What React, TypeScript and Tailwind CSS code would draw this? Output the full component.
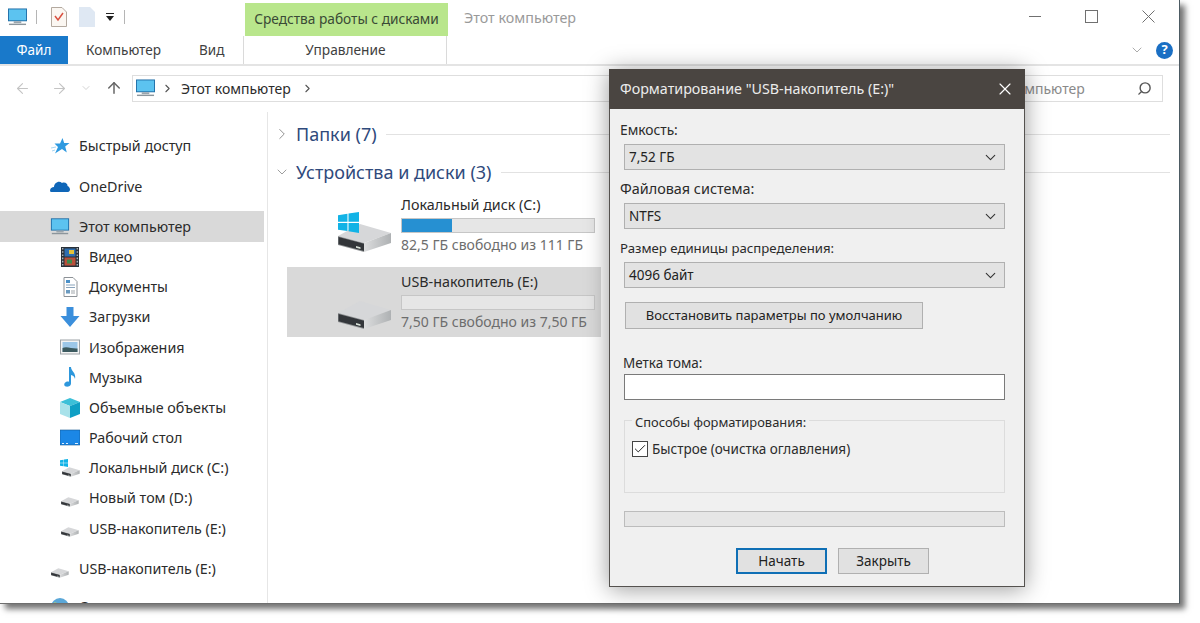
import { ChevronDown, ChevronRight, Search, X, ArrowLeft, ArrowRight, ArrowUp, Check } from "lucide-react";

const font = "font-['Noto_Sans','Open_Sans',sans-serif]";

function Monitor({ className = "w-[22px] h-[19px]" }: { className?: string }) {
  return (
    <svg viewBox="0 0 22 19" className={className}>
      <rect x="1" y="0.5" width="20" height="13.5" fill="#1f6fa8" />
      <rect x="2" y="1.5" width="18" height="11.5" fill="#5cc3f0" />
      <rect x="7" y="14" width="8" height="2" fill="#9aa5ad" />
      <rect x="2" y="16.5" width="18" height="1.5" fill="#8b959c" />
    </svg>
  );
}

function Drive({ className = "w-[18px] h-[10px]" }: { className?: string }) {
  return (
    <svg viewBox="0 0 54 30" className={className}>
      <defs>
        <linearGradient id="driveSide" x1="0" x2="1" y1="0" y2="0">
          <stop offset="0" stopColor="#dcddde" />
          <stop offset="1" stopColor="#aeb1b3" />
        </linearGradient>
      </defs>
      <path d="M0 13 L22 1 L53 10 L26 20 Z" fill="#d6d7d9" />
      <path d="M26 20 L53 10 V20 L26 29 Z" fill="url(#driveSide)" />
      <path d="M0 13 L26 20 V29 L0 22 Z" fill="#8f9294" />
      <path d="M0.5 14 L26 20.8 V28 L0.5 21.2 Z" fill="#33363a" />
      <path d="M18 23 L22.5 24.2 V26 L18 24.8 Z" fill="#d9e2d9" />
    </svg>
  );
}

function WinLogo({ className }: { className: string }) {
  return (
    <svg viewBox="0 0 20 20" className={className}>
      <path d="M0 3 L9 1.6 V9.4 H0 Z M10 1.4 L20 0 V9.4 H10 Z M0 10.4 H9 V18.2 L0 17 Z M10 10.4 H20 V20 L10 18.4 Z" fill="#12b3e6" />
    </svg>
  );
}

function NavIcon({ kind }: { kind: string }) {
  const cls = "w-[20px] h-[20px]";
  switch (kind) {
    case "star":
      return (
        <svg viewBox="0 0 20 20" className={cls}>
          <path d="M12.5 2 L14.2 7 H19.5 L15.2 10.4 L16.8 16.5 L12 13 L5 17.5 L8 11 L4.5 7.5 H10 Z" fill="#2f9ae0" />
          <path d="M1 12 L6 11 M2 15 L5 14" stroke="#a9d6f2" strokeWidth="1" />
        </svg>
      );
    case "cloud":
      return (
        <svg viewBox="0 0 20 20" className={cls}>
          <path d="M0 15 C0 12 2 11 4 11 C4 7 9 4 12 7 C15 5.5 18 8 17.5 10 C19 10 20 12.5 20 13.5 C20 15 19 16 18 16 H2 C1 16 0 15.8 0 15 Z" fill="#0f66b8" />
        </svg>
      );
    case "film":
      return (
        <svg viewBox="0 0 20 20" className={cls}>
          <rect x="1" y="0" width="18" height="20" fill="#2a3138" />
          <path d="M2.7 1 V19 M17.3 1 V19" stroke="#aab4bb" strokeWidth="1.4" strokeDasharray="1.6 1.6" />
          <rect x="4.5" y="1.5" width="11" height="8" fill="#2f6fb0" />
          <rect x="4.5" y="10.5" width="11" height="8" fill="#b9503a" />
          <rect x="9" y="3" width="5" height="4" fill="#e6c33a" />
          <rect x="7" y="12.5" width="5" height="4" fill="#3f8a4c" />
        </svg>
      );
    case "doc":
      return (
        <svg viewBox="0 0 20 20" className={cls}>
          <path d="M4 0.5 H13 L17 4.5 V19.5 H4 Z" fill="#fff" stroke="#8d9297" />
          <rect x="6" y="3" width="4" height="3" fill="#4a90c8" />
          <path d="M6 8 H15 M6 10.5 H15" stroke="#8aa4bc" />
          <rect x="6" y="13" width="4" height="3.5" fill="#6a9ac0" />
          <path d="M11 14 H15 M11 16 H15" stroke="#a0a6ab" />
        </svg>
      );
    case "down":
      return (
        <svg viewBox="0 0 20 20" className={cls}>
          <path d="M6.5 0 H13.5 V9 H19.5 L10 20 L0.5 9 H6.5 Z" fill="#3b8fdc" />
        </svg>
      );
    case "pic":
      return (
        <svg viewBox="0 0 20 20" className={cls}>
          <rect x="0.5" y="3" width="19" height="14" fill="#f4f4f4" stroke="#9ea3a7" />
          <rect x="2.5" y="5" width="15" height="10" fill="#9cc7e8" />
          <path d="M2.5 15 V11 C7 9 12 12 17.5 11.5 V15 Z" fill="#3c5a5f" />
        </svg>
      );
    case "note":
      return (
        <svg viewBox="0 0 20 20" className={cls}>
          <path d="M9 0 H11 C11 4 16.5 6 15 12 C14.6 9.5 13 8.5 11 8 V16.5 C11 19 8 20 6 19.6 C3.6 19 3.8 16 6 15 C7 14.5 8 14.4 9 14.8 Z" fill="#2d97dc" />
        </svg>
      );
    case "cube":
      return (
        <svg viewBox="0 0 20 20" className={cls}>
          <path d="M10 0 L20 4 L10 8 L0 4 Z" fill="#3cc0d8" />
          <path d="M0 4 L10 8 V20 L0 16 Z" fill="#a8e2ea" />
          <path d="M20 4 L10 8 V20 L20 16 Z" fill="#0f9fc4" />
        </svg>
      );
    case "desk":
      return (
        <svg viewBox="0 0 20 20" className={cls}>
          <rect x="0" y="2" width="20" height="15" fill="#1b87e6" stroke="#14588f" strokeWidth="0.6" />
          <path d="M2 15.5 H4 M6 15.5 H8 M15 15.5 H18" stroke="#dff0ff" />
        </svg>
      );
    case "globe":
      return (
        <svg viewBox="0 0 20 20" className={cls}>
          <circle cx="10" cy="10" r="9" fill="#5aa7d8" />
          <path d="M4 5 C8 5 8 9 12 9 C10 13 7 11 4 9 Z" fill="#8fbf9a" />
        </svg>
      );
    case "osdrive":
      return (
        <span className="relative block w-[20px] h-[20px]">
          <WinLogo className="absolute left-0 top-[1px] w-[8px] h-[8px]" />
          <Drive className="absolute left-[2px] bottom-[1px] w-[18px] h-[10px]" />
        </span>
      );
    default:
      return (
        <span className="flex w-[20px] h-[20px] items-end justify-center pb-[1px]">
          <Drive className="w-[18px] h-[10px]" />
        </span>
      );
  }
}

const libraries = [
  ["film", "Видео"],
  ["doc", "Документы"],
  ["down", "Загрузки"],
  ["pic", "Изображения"],
  ["note", "Музыка"],
  ["cube", "Объемные объекты"],
  ["desk", "Рабочий стол"],
  ["osdrive", "Локальный диск (C:)"],
  ["drive", "Новый том (D:)"],
  ["drive", "USB-накопитель (E:)"],
];

function NavRow({ icon, label, child, className = "" }: { icon: React.ReactNode; label: string; child?: boolean; className?: string }) {
  return (
    <div className={`flex h-[30.2px] items-center gap-[9px] ${child ? "pl-[60px]" : "pl-[50px]"} ${className}`}>
      <span className="flex w-[20px] justify-center">{icon}</span>
      <span className="text-[14.3px] text-[#2b2b2b] whitespace-nowrap">{label}</span>
    </div>
  );
}

function Sidebar() {
  return (
    <div className="w-[264px] shrink-0 pt-[19px]">
      <NavRow icon={<NavIcon kind="star" />} label="Быстрый доступ" />
      <NavRow icon={<NavIcon kind="cloud" />} label="OneDrive" className="mt-[10px]" />
      <NavRow icon={<Monitor />} label="Этот компьютер" className="mt-[10px] bg-[#d9d9d9]" />
      {libraries.map(([icon, label]) => (
        <NavRow key={label} icon={<NavIcon kind={icon} />} label={label} child />
      ))}
      <NavRow icon={<NavIcon kind="drive" />} label="USB-накопитель (E:)" className="mt-[10px]" />
      <NavRow icon={<NavIcon kind="globe" />} label="Сеть" className="mt-[8px]" />
    </div>
  );
}

function SectionHeading({ open, title, className = "" }: { open?: boolean; title: string; className?: string }) {
  return (
    <div className={`flex h-[28px] items-center pr-[9px] ${className}`}>
      <span className="flex w-[28px] justify-center text-[#8a8a8a]">
        {open ? <ChevronDown size={16} strokeWidth={1.25} /> : <ChevronRight size={18} strokeWidth={1.25} />}
      </span>
      <span className="text-[18px] text-[#2f4a7c] whitespace-nowrap">{title}</span>
      <span className="ml-[9px] h-px flex-1 bg-[#e2e2e2]" />
    </div>
  );
}

function DriveCard({ name, free, percent, selected, system }: { name: string; free: string; percent: number; selected?: boolean; system?: boolean }) {
  return (
    <div className={`flex h-[70px] w-[314px] ${selected ? "bg-[#d9d9d9]" : ""}`}>
      <div className="relative h-full w-[114px] shrink-0">
        <Drive className="absolute left-[51px] top-[33px] w-[54px] h-[30px]" />
        {system && <WinLogo className="absolute left-[51px] top-[22px] w-[21px] h-[21px]" />}
      </div>
      <div className="w-[194px] pt-[5px]">
        <div className="text-[14.3px] leading-[20px] text-[#2b2b2b] whitespace-nowrap">{name}</div>
        <div className="mt-[3px] h-[15px] border border-[#c6c6c6] bg-[#e6e6e6]">
          <div className="h-full bg-[#2690d2]" style={{ width: `${percent}%` }} />
        </div>
        <div className="mt-[2px] text-[14px] leading-[20px] text-[#6d6d6d] whitespace-nowrap">{free}</div>
      </div>
    </div>
  );
}

function FieldSelect({ value }: { value: string }) {
  return (
    <div className="ml-[14px] flex h-[26px] w-[381px] items-center justify-between border border-[#b0b0b0] bg-[#e3e3e3] pl-[4px] pr-[5px]">
      <span className="text-[13.5px] text-[#222]">{value}</span>
      <ChevronDown size={17} strokeWidth={1.5} className="text-[#333]" />
    </div>
  );
}

function FieldLabel({ text, className = "" }: { text: string; className?: string }) {
  return <div className={`pl-[10px] leading-[20px] text-[#2b2b2b] ${className}`}>{text}</div>;
}

function FormatDialog() {
  return (
    <div className="absolute left-[609px] top-[69px] w-[416px] border-x border-b border-[#55524f] bg-[#f0f0f0] shadow-[0_2px_22px_rgba(0,0,0,0.4)]">
      <div className="-mx-px flex h-[40px] items-center justify-between bg-[#4a4541] pl-[11px] pr-[10px]">
        <span className="text-[14.3px] text-[#ececec]">Форматирование "USB-накопитель (E:)"</span>
        <X size={20} strokeWidth={1.4} className="text-white" />
      </div>
      <div className="pb-[12px] pt-[11px]">
        <FieldLabel text="Емкость:" className="text-[13.8px]" />
        <div className="mt-[4px]"><FieldSelect value="7,52 ГБ" /></div>
        <FieldLabel text="Файловая система:" className="mt-[9px] text-[14.4px]" />
        <div className="mt-[4px]"><FieldSelect value="NTFS" /></div>
        <FieldLabel text="Размер единицы распределения:" className="mt-[9px] text-[13.2px]" />
        <div className="mt-[4px]"><FieldSelect value="4096 байт" /></div>
        <button className="ml-[15px] mt-[14px] block h-[27px] w-[298px] border border-[#b0b0b0] bg-[#e1e1e1] text-[13px] text-[#222]">
          Восстановить параметры по умолчанию
        </button>
        <FieldLabel text="Метка тома:" className="mt-[24px] pl-[13px] text-[13.5px]" />
        <div className="ml-[14px] mt-px h-[26px] w-[381px] border border-[#7a7a7a] bg-white" />
        <div className="relative ml-[14px] mt-[20px] h-[73px] w-[381px] border border-[#dcdcdc] pl-[7px] pt-[18px]">
          <span className="absolute left-[7px] top-[-9px] bg-[#f0f0f0] px-[3px] text-[12.9px] leading-[20px] text-[#2b2b2b]">
            Способы форматирования:
          </span>
          <div className="flex items-center gap-[4px]">
            <span className="flex h-[16px] w-[16px] items-center justify-center border border-[#444] bg-white">
              <Check size={14} strokeWidth={1.7} className="text-[#222]" />
            </span>
            <span className="text-[13.5px] text-[#2b2b2b]">Быстрое (очистка оглавления)</span>
          </div>
        </div>
        <div className="ml-[14px] mt-[18px] h-[16px] w-[381px] border border-[#bcbcbc] bg-[#e6e6e6]" />
        <div className="ml-[126px] mt-[21px] flex gap-[11px]">
          <button className="h-[26px] w-[91px] border-2 border-[#0f6fb5] bg-[#e1e1e1] text-[13.5px] text-[#222]">Начать</button>
          <button className="h-[26px] w-[91px] border border-[#b0b0b0] bg-[#e1e1e1] text-[13.5px] text-[#222]">Закрыть</button>
        </div>
      </div>
    </div>
  );
}

export default function App() {
  return (
    <div className={`h-[623px] w-[1200px] overflow-hidden bg-white ${font}`}>
      <div className="relative flex h-[604px] w-[1180px] flex-col border-b border-r border-b-[#6f6f6f] border-r-[#4d5b63] bg-white shadow-[5px_5px_6px_rgba(0,0,0,0.55)]">
        {/* title bar */}
        <div className="flex h-[36px] shrink-0 items-start">
          <div className="flex items-center pl-[7px] pt-[7px]">
            <Monitor className="w-[21px] h-[18px]" />
            <span className="ml-[8px] h-[14px] w-px bg-[#b5b5b5]" />
            <svg viewBox="0 0 16 20" className="ml-[14px] h-[20px] w-[16px]">
              <path d="M0.5 0.5 H11 L15.5 5 V19.5 H0.5 Z" fill="#fbf7f2" stroke="#b3a99f" />
              <path d="M4 9 L7 13 L12 6" fill="none" stroke="#d9503f" strokeWidth="1.5" />
            </svg>
            <svg viewBox="0 0 16 20" className="ml-[12px] h-[20px] w-[16px]">
              <path d="M0 0 H11 L16 5 V20 H0 Z" fill="#dfe8f3" />
            </svg>
            <svg viewBox="0 0 10 8" className="ml-[10px] h-[8px] w-[10px]">
              <path d="M1 0 H9 V1 H1 Z M1 3 H9 L5 8 Z" fill="#222" />
            </svg>
            <span className="ml-[9px] h-[14px] w-px bg-[#b5b5b5]" />
          </div>
          <div className="ml-[120px] mt-[3px] flex h-[33px] w-[203px] items-center justify-center bg-[#b9e68c]">
            <span className="text-[13.7px] text-[#3a4a36]">Средства работы с дисками</span>
          </div>
          <span className="ml-[16px] mt-[7px] text-[14.3px] text-[#9a9a9a]">Этот компьютер</span>
          <svg viewBox="0 0 128 13" className="ml-auto mr-[23px] mt-[10px] h-[13px] w-[128px]" fill="none" stroke="#707070">
            <path d="M1 6.5 H13" />
            <rect x="57.5" y="0.5" width="12" height="12" />
            <path d="M114.5 0.5 L126.5 12.5 M126.5 0.5 L114.5 12.5" />
          </svg>
        </div>

        {/* ribbon tabs */}
        <div className="flex h-[30px] shrink-0 items-stretch border-b-2 border-[#e4e4e4]">
          <div className="flex w-[68px] items-center justify-center bg-[#1979ca] text-[13.5px] text-white">Файл</div>
          <span className="ml-[18px] self-center text-[13.6px] text-[#3f3f3f]">Компьютер</span>
          <span className="ml-[38px] self-center text-[13.5px] text-[#3f3f3f]">Вид</span>
          <div className="ml-[19px] flex w-[204px] items-center justify-center border-x border-[#dadada] text-[13.7px] text-[#3f3f3f]">
            Управление
          </div>
          <div className="ml-auto flex items-center gap-[11px] pr-[6px]">
            <ChevronDown size={16} strokeWidth={1.25} className="text-[#9a9a9a]" />
            <span className="flex h-[17px] w-[17px] items-center justify-center rounded-full bg-[#1a6fc4] text-[13px] font-bold text-white">?</span>
          </div>
        </div>

        {/* address bar */}
        <div className="flex h-[46px] shrink-0 items-center pb-[2px]">
          <div className="flex w-[132px] items-center pl-[14px] text-[#c4c4c4]">
            <ArrowLeft size={17} strokeWidth={1.5} />
            <ArrowRight size={17} strokeWidth={1.5} className="ml-[20px]" />
            <ChevronDown size={12} strokeWidth={1.5} className="ml-[12px]" />
            <ArrowUp size={18} strokeWidth={2} className="ml-[13px] text-[#666]" />
          </div>
          <div className="flex h-[27px] w-[782px] items-center border border-[#dedede]">
            <Monitor className="ml-[2px] w-[21px] h-[18px]" />
            <ChevronRight size={13} strokeWidth={2} className="ml-[5px] text-[#555]" />
            <span className="ml-[7px] text-[14px] text-[#2b2b2b]">Этот компьютер</span>
            <ChevronRight size={13} strokeWidth={2} className="ml-[10px] text-[#555]" />
          </div>
          <div className="ml-[8px] mr-[16px] flex h-[27px] flex-1 items-center justify-between border border-[#dedede] pl-[3px] pr-[10px]">
            <span className="text-[14px] text-[#8a8a8a]">Поиск: Этот компьютер</span>
            <Search size={15} strokeWidth={2.25} className="-scale-x-100 text-[#555]" />
          </div>
        </div>

        {/* body */}
        <div className="flex min-h-0 flex-1 overflow-hidden">
          <Sidebar />
          <div className="ml-[3px] flex-1 border-l border-[#e6e6e6] pt-[8px]">
            <SectionHeading title="Папки (7)" />
            <SectionHeading open title="Устройства и диски (3)" className="mt-[10px]" />
            <div className="ml-[19px] mt-[4px] flex flex-col gap-[7px]">
              <DriveCard name="Локальный диск (C:)" free="82,5 ГБ свободно из 111 ГБ" percent={26} system />
              <DriveCard name="USB-накопитель (E:)" free="7,50 ГБ свободно из 7,50 ГБ" percent={0} selected />
            </div>
          </div>
        </div>

        <FormatDialog />
      </div>
    </div>
  );
}
